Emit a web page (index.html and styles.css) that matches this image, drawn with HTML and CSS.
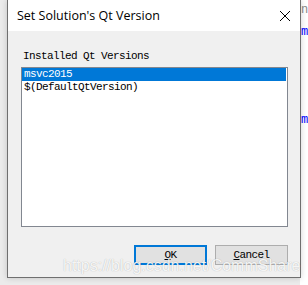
FILE: index.html
```html
<!DOCTYPE html>
<html lang="en">
<head>
	<meta charset="UTF-8">
	<title>Set Solution's Qt Version</title>
	<link rel="stylesheet" href="styles.css">
</head>
<body>
	<div class="desk">
		<div class="editor">
			<span class="code c1">n</span>
			<span class="code c2">m</span>
			<span class="code c3">m</span>
		</div>
		<div class="dialog">
			<div class="titlebar">
				<span class="title">Set Solution's Qt Version</span>
				<svg class="close" width="12" height="12" viewBox="0 0 12 12">
					<path d="M1 1 L11 11 M11 1 L1 11" stroke="#000" stroke-width="1" fill="none"/>
				</svg>
			</div>
			<div class="body">
				<div class="label">Installed Qt Versions</div>
				<ul class="list">
					<li class="selected">msvc2015</li>
					<li>$(DefaultQtVersion)</li>
				</ul>
				<div class="buttons">
					<button class="btn default"><u>O</u>K</button>
					<button class="btn"><u>C</u>ancel</button>
				</div>
			</div>
		</div>
		<div class="watermark">https://blog.csdn.net/CommShare</div>
	</div>
</body>
</html>
```
FILE: styles.css
```css
body,ul,li,div{
	margin: 0;
	padding: 0;
}
ul,li{
	list-style: none;
}
body{
	width: 308px;
	height: 285px;
	overflow: hidden;
	background: #ebebeb;
}
.desk{
	position: relative;
	width: 308px;
	height: 285px;
	display: flex;
}
.editor{
	position: absolute;
	top: 0;
	right: 0;
	width: 8px;
	height: 285px;
	background: #fff;
}
.code{
	position: absolute;
	left: 1px;
	font: 12px "Liberation Mono", monospace;
	color: #0000ff;
}
.c1{ top: 3px; color: #888; }
.c2{ top: 25px; }
.c3{ top: 113px; }
.dialog{
	position: relative;
	margin-left: 7px;
	width: 294px;
	height: 278px;
	box-sizing: border-box;
	border: 1px solid #6f6f6f;
	border-top: none;
	background: #f0f0f0;
	display: flex;
	flex-direction: column;
	box-shadow: 0 0 6px rgba(0,0,0,0.18);
}
.titlebar{
	height: 31px;
	background: #fff;
	display: flex;
	align-items: center;
	justify-content: space-between;
	padding: 0 9px 0 9px;
}
.title{
	font: 12.5px "Open Sans", sans-serif;
	color: #000;
	padding-bottom: 1px;
}
.body{
	flex: 1;
	padding: 19px 12px 0 13px;
	display: flex;
	flex-direction: column;
	font: 11px "Liberation Mono", monospace;
	letter-spacing: -0.6px;
	color: #000;
}
.label{
	padding-left: 2px;
	height: 17px;
	line-height: 13px;
}
.list{
	height: 160px;
	box-sizing: border-box;
	border: 1px solid #828790;
	background: #fff;
}
.list li{
	height: 13px;
	line-height: 13px;
	padding-left: 2px;
	margin-right: 1px;
}
.list li.selected{
	background: #0078d7;
	color: #fff;
}
.buttons{
	display: flex;
	justify-content: flex-end;
	gap: 8px;
	margin-top: 18px;
}
.btn{
	width: 73px;
	height: 20px;
	box-sizing: border-box;
	border: 1px solid #adadad;
	background: #e1e1e1;
	font: 11px "Liberation Mono", monospace;
	letter-spacing: -0.6px;
	color: #000;
	padding: 0;
}
.btn.default{
	border: 2px solid #0078d7;
}
.watermark{
	position: absolute;
	left: 63px;
	top: 257px;
	font: 16px "Liberation Sans", Arial, sans-serif;
	color: rgba(255,255,255,0.9);
	text-shadow: 0 0 1px rgba(0,0,0,0.3);
}
```
